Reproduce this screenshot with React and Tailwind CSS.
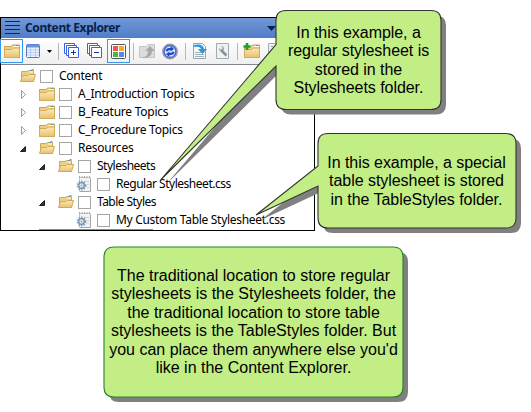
function Folder({ open, plus, className = '' }) {
  return (
    <svg width="18" height="16" viewBox="0 0 18 16" className={`shrink-0 ${className}`}>
      <defs>
        <linearGradient id="fold" x1="0" y1="0" x2="0" y2="1">
          <stop offset="0" stopColor="#fbe9b2" />
          <stop offset="1" stopColor="#e6c172" />
        </linearGradient>
      </defs>
      {open ? (
        <>
          <path d="M2.5 13.5V3.5H8L9.5 2.5H14.5V13.5Z" fill="#f0cf83" stroke="#cfa955" />
          <path d="M10.5 4H14" stroke="#fff" />
          <path d="M11 2.5H13" stroke="#3aa5e0" />
          <path d="M12.5 1.5H14.5" stroke="#42c553" />
          <path d="M1.5 13.5L3.5 7.5H9L10 6.5H16.5L14.5 13.5Z" fill="url(#fold)" stroke="#d0a954" />
        </>
      ) : (
        <>
          <path d="M1.5 14.5V3.5H8L9.5 2H16.5V14.5Z" fill="#f0cf83" stroke="#c9a14e" />
          <path d="M10.5 3.5H16" stroke="#fff" />
          <path d="M13 2.5H15.5" stroke="#3aa5e0" />
          <path d="M1.5 6.5H8.5L10 5H16.5V14.5H1.5Z" fill="url(#fold)" stroke="#d3ac5b" />
        </>
      )}
      {plus && <path d="M4 0V7M.5 3.5H7.5" stroke="#17a52a" strokeWidth="2.6" />}
    </svg>
  );
}

function CssFile() {
  return (
    <svg width="16" height="18" viewBox="0 0 16 18" className="shrink-0">
      <path d="M3.5 2.5H14.5V16.5H3.5Z" fill="#f3f3f3" stroke="#c4c4c4" />
      <path d="M3 2H14" stroke="#aaa" strokeWidth="2" strokeDasharray="1 1.5" />
      <path d="M14.5 4V16.5H4" stroke="#a5a5a5" fill="none" />
      <path d="M8 6.5H13M11 9.5H13M11 12.5H13" stroke="#d5d5d5" />
      <circle cx="5.5" cy="10.5" r="4.2" fill="none" stroke="#86a0ba" strokeWidth="1.5" strokeDasharray="1.6 1.1" />
      <circle cx="5.5" cy="10.5" r="2.8" fill="#e8f0f7" stroke="#6c8cad" strokeWidth="1.3" />
      <circle cx="5.5" cy="10.5" r="1" fill="#8fa9c4" />
    </svg>
  );
}

function Stack({ plus }) {
  return (
    <svg width="16" height="16" viewBox="0 0 16 16" className="shrink-0">
      <g fill="#fff" stroke="#3a62df">
        <path d="M.5 .5H10.5V10.5H.5Z" />
        <path d="M2.5 2.5H12.5V12.5H2.5Z" />
        <path d="M4.5 4.5H14.5V14.5H4.5Z" />
      </g>
      <path d={plus ? 'M7 9.5H12M9.5 7V12' : 'M7 9.5H12'} stroke="#1c2f9a" />
    </svg>
  );
}

const Sep = ({ className }) => <div className={`h-[17px] w-px shrink-0 bg-[#b9b9b9] ${className}`} />;

function Toolbar() {
  return (
    <div className="flex h-[27px] items-center border-b border-[#85858f] bg-linear-to-b from-white to-[#efefef]">
      <div className="-ml-px flex h-6 w-[23px] shrink-0 items-center justify-center border border-[#3399ee]">
        <Folder />
      </div>
      <svg width="14" height="14" viewBox="0 0 14 14" className="ml-[3px] mr-px shrink-0">
        <rect x=".5" y=".5" width="13" height="13" rx="1" fill="#eef4ff" stroke="#5878b8" />
        <path d="M1 2H13" stroke="#6c91e2" strokeWidth="3" />
        <path d="M1 6H13M1 8.5H13M1 11H13M4.5 4V13M9.5 4V13" stroke="#b6cbed" />
      </svg>
      <svg width="5" height="3" viewBox="0 0 5 3" className="ml-[6px] mr-px shrink-0"><path d="M0 0H5L2.5 3Z" /></svg>
      <Sep className="ml-[5px]" />
      <div className="ml-[5px] flex gap-[7px]"><Stack plus /><Stack /></div>
      <div className="ml-1 flex h-6 w-[23px] shrink-0 items-center justify-center border border-[#3399ee]">
        <svg width="15" height="15" viewBox="0 0 15 15">
          <rect x=".5" y=".5" width="14" height="14" rx="1" fill="#fff" stroke="#555" />
          <rect x="2" y="2" width="5" height="5" fill="#ee5651" />
          <rect x="8" y="2" width="5" height="5" fill="#f0ae28" />
          <rect x="2" y="8" width="5" height="5" fill="#4bb83e" />
          <rect x="8" y="8" width="5" height="5" fill="#5287ed" />
        </svg>
      </div>
      <Sep className="ml-[3px]" />
      <svg width="17" height="16" viewBox="0 0 17 16" className="ml-[5px] shrink-0">
        <path d="M.5 14.5V3.5H7L9 1.5H15.5V14.5Z" fill="#dcdcdc" stroke="#c4c4c4" />
        <path d="M4 14Q9 14 9 8H6L11 3L16 8H13Q13 15 4 15Z" fill="#a8a8a8" />
      </svg>
      <svg width="17" height="17" viewBox="0 0 17 17" className="ml-[6px] shrink-0">
        <circle cx="8" cy="8.5" r="7.2" fill="#3f66d6" stroke="#9a9aa6" strokeWidth="1.4" />
        <circle cx="8" cy="8.5" r="5.2" fill="#dbe5fb" />
        <path d="M3.5 8Q4 4.5 8.5 5V3L12 6L8.5 8.5V7Q6 7 5.5 8.5ZM12.5 9Q12 12.5 7.5 12V14L4 11L7.5 8.5V10Q10 10 10.5 8.5Z" fill="#1d49c6" />
      </svg>
      <Sep className="ml-[6px]" />
      <svg width="15" height="16" viewBox="0 0 15 16" className="ml-[7px] shrink-0">
        <path d="M.5 .5H9.5L12.5 3.5V15.5H.5Z" fill="#f5f7f8" stroke="#92a6b0" />
        <path d="M2 9.5H10M2 11.5H11M2 13.5H11" stroke="#9eb2bd" />
        <path d="M1 2Q10 0 11 6H14L9.5 11L5 6H8Q7 3 1 4Z" fill="#2b9ae0" />
      </svg>
      <svg width="14" height="16" viewBox="0 0 14 16" className="ml-2 shrink-0">
        <path d="M.5 .5H12.5V15.5H.5Z" fill="#eef1f2" stroke="#9eadb3" />
        <path d="M5 7L10.5 12.5" stroke="#8e8e8e" strokeWidth="2.5" />
        <path d="M3 5L5 7L7 5L5 3Q8 3 8 6Q7 9 4 8Q3 7 3 5" fill="#999" />
      </svg>
      <Sep className="ml-[7px]" />
      <Folder plus className="ml-[5px]" />
      <svg width="14" height="16" viewBox="0 0 14 16" className="ml-[7px] shrink-0">
        <path d="M.5 .5H13.5V15.5H.5Z" fill="#eef1f2" stroke="#9eadb3" />
        <path d="M3 3.5H11M3 6.5H11M3 9.5H11" stroke="#7fa08c" strokeDasharray="2 1" />
      </svg>
    </div>
  );
}

const rows = [
  { label: 'Content', kind: 'open', pad: 'pl-[18px]' },
  { label: 'A_Introduction Topics', kind: 'closed', arrow: 'closed', pad: 'pl-[18px]' },
  { label: 'B_Feature Topics', kind: 'closed', arrow: 'closed', pad: 'pl-[18px]' },
  { label: 'C_Procedure Topics', kind: 'closed', arrow: 'closed', pad: 'pl-[18px]' },
  { label: 'Resources', kind: 'open', arrow: 'open', pad: 'pl-[18px]' },
  { label: 'Stylesheets', kind: 'open', arrow: 'open', pad: 'pl-[37px]', spacing: 'tracking-[-0.5px]' },
  { label: 'Regular Stylesheet.css', kind: 'file', pad: 'pl-[75px]', spacing: 'tracking-[-0.48px]' },
  { label: 'Table Styles', kind: 'open', arrow: 'open', pad: 'pl-[37px]', spacing: 'tracking-[-0.55px]' },
  { label: 'My Custom Table Stylesheet.css', kind: 'file', pad: 'pl-[75px]', spacing: 'tracking-[-0.3px]' },
];

function TreeRow({ label, kind, arrow, pad, spacing = 'tracking-[-0.25px]' }) {
  return (
    <div className={`flex h-[18px] items-center ${pad}`}>
      {arrow && (
        <svg width="19" height="11" viewBox="0 0 19 11" className="shrink-0">
          {arrow === 'open' ? (
            <path d="M6.5 3.5V8.5H1.5Z" fill="#333" stroke="#222" />
          ) : (
            <path d="M2.5 1.5L6.5 5.5L2.5 9.5Z" fill="#fff" stroke="#999" />
          )}
        </svg>
      )}
      {kind === 'file' ? <CssFile /> : <Folder open={kind === 'open'} />}
      <div className={`h-[13px] w-[13px] shrink-0 border border-[#a5a5a5] bg-white ${kind === 'file' ? 'ml-[5px]' : 'ml-[3px]'}`} />
      <span className={`ml-[6px] whitespace-nowrap text-[12px] leading-[18px] ${spacing}`}>{label}</span>
    </div>
  );
}

function Lines({ lines, className }) {
  return (
    <div className={`absolute flex flex-col items-center whitespace-nowrap font-['Liberation_Sans',Arial,sans-serif] text-[16px] leading-[18.4px] ${className}`}>
      {lines.map((line) => <div key={line}>{line}</div>)}
    </div>
  );
}

function Balloon({ d, stroke = '#333' }) {
  return (
    <>
      <path d={d} transform="translate(5 5)" fill="#808080" />
      <path d={d} fill="#c2ee85" stroke={stroke} strokeWidth="1.1" />
    </>
  );
}

export default function App() {
  return (
    <div className="relative h-[412px] w-[531px] overflow-hidden bg-white text-black">
      <div className="pt-[17px]">
        <div className="relative h-[214px] w-[315px] border border-black bg-white font-['Noto_Sans','Open_Sans',sans-serif]">
          <div className="flex h-5 items-center bg-linear-to-b from-[#7298d6] to-[#507dc8]">
            <svg width="16" height="14" viewBox="0 0 16 14" className="ml-1 shrink-0"><path d="M0 .5H15M0 4.5H15M0 8.5H15M0 12.5H15" stroke="#0b2452" /></svg>
            <span className="ml-[4px] text-[12px] font-bold tracking-[-0.4px] text-[#06214d]">Content Explorer</span>
            <svg width="9" height="5" viewBox="0 0 9 5" className="ml-auto mr-[38px]"><path d="M0 0H9L4.5 5Z" fill="#06214d" /></svg>
          </div>
          <Toolbar />
          <div className="pt-[2px]">{rows.map((row) => <TreeRow key={row.label} {...row} />)}</div>
          <div className="absolute bottom-0 left-[38px] h-px w-[114px] bg-[#6c91c7]" />
        </div>
      </div>
      <svg width="531" height="412" viewBox="0 0 531 412" className="absolute left-0 top-0">
        <Balloon d="M286 10.5H431Q441 10.5 441 20.5V99.5Q441 109.5 431 109.5H286Q276 109.5 276 99.5V66L161 179.5L276 44.5V20.5Q276 10.5 286 10.5Z" />
        <Balloon d="M328 133.5H506Q516 133.5 516 143.5V218Q516 228 506 228H328Q318 228 318 218V186L256 215L318 166V143.5Q318 133.5 328 133.5Z" />
        <Balloon stroke="#26852a" d="M114 247H393Q403 247 403 257V387Q403 397 393 397H114Q104 397 104 387V257Q104 247 114 247Z" />
      </svg>
      <Lines className="left-[276px] top-[24px] w-[165px] tracking-[-0.05px]" lines={['In this example, a', 'regular stylesheet is', 'stored in the', 'Stylesheets folder.']} />
      <Lines className="left-[318px] top-[154px] w-[197px] tracking-[-0.05px]" lines={['In this example, a special', 'table stylesheet is stored', 'in the TableStyles folder.']} />
      <Lines className="left-[104px] top-[267px] w-[299px]" lines={['The traditional location to store regular', 'stylesheets is the Stylesheets folder, the', 'the traditional location to store table', 'stylesheets is the TableStyles folder. But', "you can place them anywhere else you'd", 'like in the Content Explorer.']} />
    </div>
  );
}
